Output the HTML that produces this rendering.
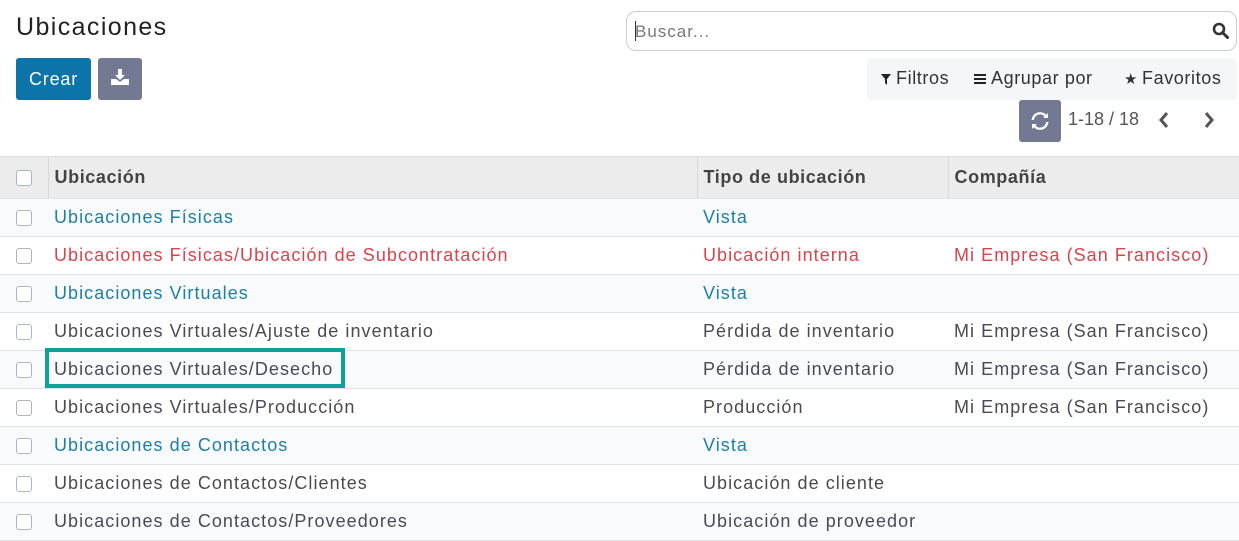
<!DOCTYPE html>
<html><head><meta charset="utf-8"><style>
*{box-sizing:border-box;margin:0;padding:0}
body{width:1239px;height:541px;overflow:hidden;background:#fff;font-family:"Liberation Sans",sans-serif;color:#4a4a55;position:relative}
.abs{position:absolute}
h1{position:absolute;left:16px;top:13px;font-size:25px;font-weight:normal;color:#222;letter-spacing:1.4px}
.btn{position:absolute;border-radius:3px;color:#fff}
.search{position:absolute;left:626px;top:11px;width:611px;height:40px;border:1px solid #ccc;border-radius:10px}
.search span{position:absolute;left:8px;top:10px;font-size:17px;color:#777;letter-spacing:1px}
.tb{position:absolute;left:867px;top:58px;width:370px;height:42px;background:#f5f6f8;border-radius:4px;font-size:18px;color:#333;letter-spacing:.6px}
.tb span{position:absolute;top:10px}
table{position:absolute;left:0;top:156px;width:1239px;border-collapse:collapse;font-size:18px;letter-spacing:1.05px}
td,th{height:38px;border-bottom:1px solid #e2e2e2;text-align:left;padding-left:6px;white-space:nowrap}
th{height:42px;background:#ececec;border-top:1px solid #dcdcdc;font-weight:bold;color:#444;letter-spacing:.6px}
th+th{border-left:1px solid #d8d8d8}
tr:nth-child(odd) td{background:#fff}
tr:nth-child(even) td{background:#f9fafb}
.cb{display:inline-block;width:16px;height:16px;border:1px solid #adb5bd;border-radius:3px;background:#fff;vertical-align:middle;margin-left:16px}
td:first-child,th:first-child{width:48px;padding:0}
.bl{color:#1d7fa5}.rd{color:#d9434b}
</style></head><body>
<h1>Ubicaciones</h1>
<div class="btn" style="left:16px;top:58px;width:75px;height:42px;background:#0b74a8;font-size:18px;line-height:42px;text-align:center;letter-spacing:.8px">Crear</div>
<div class="btn" style="left:98px;top:58px;width:44px;height:42px;background:#737893">
<svg class="abs" style="left:13px;top:11px" width="18" height="16" viewBox="0 0 18 16"><path d="M7 0h4v6h3l-5 5-5-5h3z" fill="#fff"/><path d="M0 10h5l4 3 4-3h5v6H0z" fill="#fff"/></svg></div>
<div class="search"><span>Buscar...</span><div class="abs" style="left:8px;top:9px;width:1px;height:20px;background:#333"></div>
<svg class="abs" style="left:585px;top:10px" width="17" height="17" viewBox="0 0 17 17"><circle cx="7" cy="7" r="5" fill="none" stroke="#333" stroke-width="2.6"/><path d="M10.5 10.5l5 5" stroke="#333" stroke-width="3" stroke-linecap="round"/></svg></div>
<div class="tb">
<svg class="abs" style="left:14px;top:16px" width="10" height="11" viewBox="0 0 10 11"><path d="M0 0h10L6 5v6L4 9V5z" fill="#222"/></svg><span style="left:29px">Filtros</span>
<svg class="abs" style="left:107px;top:16px" width="12" height="10"><rect y="0" width="12" height="2" fill="#222"/><rect y="4" width="12" height="2" fill="#222"/><rect y="8" width="12" height="2" fill="#222"/></svg><span style="left:124px">Agrupar por</span>
<span style="left:257px;font-size:15px;top:12px">★</span><span style="left:275px">Favoritos</span></div>
<div class="btn" style="left:1019px;top:100px;width:42px;height:42px;background:#737893">
<svg class="abs" style="left:12px;top:12px" width="18" height="18" viewBox="0 0 18 18"><path d="M3 8a6 6 0 0 1 10.5-3.5L12 6h5V1l-1.8 1.8A8.5 8.5 0 0 0 0.5 8z M15 10a6 6 0 0 1-10.5 3.5L6 12H1v5l1.8-1.8A8.5 8.5 0 0 0 17.5 10z" fill="#fff"/></svg></div>
<div class="abs" style="left:1068px;top:109px;font-size:18px;color:#555">1-18 / 18</div>
<svg class="abs" style="left:1158px;top:111px" width="12" height="18"><path d="M9 2L3 9l6 7" fill="none" stroke="#555" stroke-width="3"/></svg>
<svg class="abs" style="left:1203px;top:111px" width="12" height="18"><path d="M3 2l6 7-6 7" fill="none" stroke="#555" stroke-width="3"/></svg>
<table>
<tr><th><span class="cb"></span></th><th style="width:649px">Ubicación</th><th style="width:251px">Tipo de ubicación</th><th>Compañía</th></tr>
<tr><td><span class="cb"></span></td><td class="bl">Ubicaciones Físicas</td><td class="bl">Vista</td><td></td></tr>
<tr><td><span class="cb"></span></td><td class="rd">Ubicaciones Físicas/Ubicación de Subcontratación</td><td class="rd">Ubicación interna</td><td class="rd">Mi Empresa (San Francisco)</td></tr>
<tr><td><span class="cb"></span></td><td class="bl">Ubicaciones Virtuales</td><td class="bl">Vista</td><td></td></tr>
<tr><td><span class="cb"></span></td><td>Ubicaciones Virtuales/Ajuste de inventario</td><td>Pérdida de inventario</td><td>Mi Empresa (San Francisco)</td></tr>
<tr><td><span class="cb"></span></td><td>Ubicaciones Virtuales/Desecho</td><td>Pérdida de inventario</td><td>Mi Empresa (San Francisco)</td></tr>
<tr><td><span class="cb"></span></td><td>Ubicaciones Virtuales/Producción</td><td>Producción</td><td>Mi Empresa (San Francisco)</td></tr>
<tr><td><span class="cb"></span></td><td class="bl">Ubicaciones de Contactos</td><td class="bl">Vista</td><td></td></tr>
<tr><td><span class="cb"></span></td><td>Ubicaciones de Contactos/Clientes</td><td>Ubicación de cliente</td><td></td></tr>
<tr><td><span class="cb"></span></td><td>Ubicaciones de Contactos/Proveedores</td><td>Ubicación de proveedor</td><td></td></tr>
</table>
<div class="abs" style="left:45px;top:348px;width:300px;height:40px;border:4px solid #0fa09a"></div>
</body></html>
